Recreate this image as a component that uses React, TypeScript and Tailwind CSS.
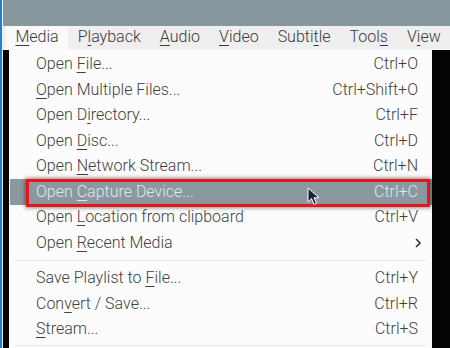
import React from "react";

const U = ({ children }: { children: React.ReactNode }) => (
  <span className="underline underline-offset-[3px] decoration-[1px]">{children}</span>
);

type Item = { pre: string; u: string; post: string; sc?: string; arrow?: boolean; hl?: boolean };

const group1: Item[] = [
  { pre: "Open ", u: "F", post: "ile...", sc: "Ctrl+O" },
  { pre: "", u: "O", post: "pen Multiple Files...", sc: "Ctrl+Shift+O" },
  { pre: "Open D", u: "i", post: "rectory...", sc: "Ctrl+F" },
  { pre: "Open ", u: "D", post: "isc...", sc: "Ctrl+D" },
  { pre: "Open ", u: "N", post: "etwork Stream...", sc: "Ctrl+N" },
  { pre: "Open ", u: "C", post: "apture Device...", sc: "Ctrl+C", hl: true },
  { pre: "Open ", u: "L", post: "ocation from clipboard", sc: "Ctrl+V" },
  { pre: "Open ", u: "R", post: "ecent Media", arrow: true },
];
const group2: Item[] = [
  { pre: "Save Playlist to ", u: "F", post: "ile...", sc: "Ctrl+Y" },
  { pre: "Con", u: "v", post: "ert / Save...", sc: "Ctrl+R" },
  { pre: "", u: "S", post: "tream...", sc: "Ctrl+S" },
];

function Row({ it }: { it: Item }) {
  return (
    <div
      className={
        "relative flex items-center h-[25.5px] pl-[26px] pr-[14px] " +
        (it.hl ? "bg-[#8a999f] text-[#e3e7e9]" : "text-[#3f3f3f]")
      }
    >
      <span className="flex-1 whitespace-nowrap">
        {it.pre}
        <U>{it.u}</U>
        {it.post}
      </span>
      {it.sc && <span className="whitespace-nowrap">{it.sc}</span>}
      {it.arrow && (
        <svg width="8" height="12" viewBox="0 0 8 12" className="mr-[-4px]">
          <path d="M2 2 L6 6 L2 10" fill="none" stroke="#333" strokeWidth="1.6" />
        </svg>
      )}
      {it.hl && (
        <>
          <div className="absolute left-[16px] top-0 w-[404px] h-[28px] border-[3px] border-[#e8141b] shadow-[0_0_4px_1px_rgba(0,0,0,0.45)]" />
          <svg
            className="absolute left-[297px] top-[8px]"
            width="14"
            height="20"
            viewBox="0 0 14 20"
          >
            <path
              d="M1 1 L1 15 L4.5 11.5 L7 17.5 L9.5 16.5 L7 10.8 L12 10.8 Z"
              fill="#1b1f3a"
              stroke="#ffffff"
              strokeWidth="1"
            />
          </svg>
        </>
      )}
    </div>
  );
}

export default function App() {
  const bar: { pre: string; u: string; post: string }[] = [
    { pre: "", u: "M", post: "edia" },
    { pre: "P", u: "l", post: "ayback" },
    { pre: "", u: "A", post: "udio" },
    { pre: "", u: "V", post: "ideo" },
    { pre: "Subti", u: "t", post: "le" },
    { pre: "Tool", u: "s", post: "" },
    { pre: "V", u: "i", post: "ew" },
  ];
  return (
    <div
      className="w-[450px] h-[348px] overflow-hidden flex bg-[#f4f4f4] font-light"
      style={{ fontFamily: "Roboto, 'Liberation Sans', sans-serif" }}
    >
      <div className="w-[2px] shrink-0 h-full bg-[#1b7fd8]" />
      <div className="flex-1 min-w-0 flex flex-col">
        <div className="h-[26px] bg-[#86979e] ml-[1px]" />
        <div className="h-[24px] bg-[#efeff0] flex items-center text-[16px] text-[#3a3a3a] border-b border-[#f8f8f8] overflow-hidden">
          {bar.map((b, i) => (
            <div
              key={i}
              className={
                "h-full shrink-0 flex items-center px-[9.5px] " + (i === 0 ? "ml-[4px] bg-[#f9f9f9]" : "")
              }
            >
              {b.pre}
              <U>{b.u}</U>
              {b.post}
            </div>
          ))}
        </div>
        <div className="flex-1 flex">
          <div className="w-[1px] shrink-0 bg-[#f0f0f0]" />
          <div className="w-[6px] shrink-0 bg-[#050505]" />
          <div className="w-[423px] shrink-0 bg-[#fcfcfc] pt-[2px] pl-[1px] text-[16px]">
            {group1.map((it, i) => (
              <Row key={i} it={it} />
            ))}
            <div className="h-[10px] flex items-center pl-[5px] pr-[6px]">
              <div className="h-[1px] w-full bg-[#e6e6e6]" />
            </div>
            {group2.map((it, i) => (
              <Row key={i} it={it} />
            ))}
            <div className="h-[6px] flex items-center pl-[5px] pr-[6px]">
              <div className="h-[1px] w-full bg-[#e6e6e6]" />
            </div>
          </div>
          <div className="flex-1 bg-[#050505]" />
        </div>
      </div>
    </div>
  );
}
